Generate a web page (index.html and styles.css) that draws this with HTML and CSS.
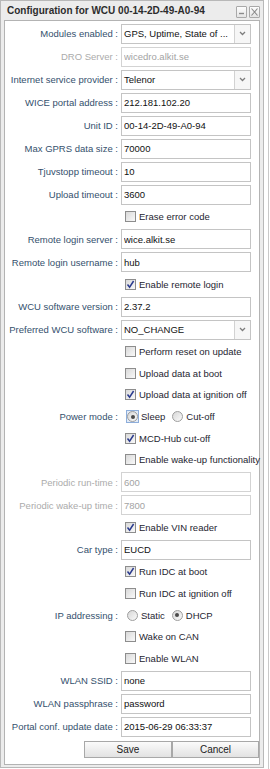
FILE: index.html
```html
<!DOCTYPE html>
<html lang="en">
<head>
    <meta charset="UTF-8">
    <title>Configuration for WCU 00-14-2D-49-A0-94</title>
    <link rel="stylesheet" href="styles.css">
</head>
<body>
<div class="window">
    <div class="titlebar">
        <span class="title">Configuration for WCU 00-14-2D-49-A0-94</span>
        <span class="tools">
            <span class="tool">
                <svg width="9" height="10" viewBox="0 0 9 10"><path d="M2 6.5 H7" stroke="#8a8a8a" stroke-width="1.4"/></svg>
            </span>
            <span class="tool">
                <svg width="9" height="10" viewBox="0 0 9 10"><path d="M1.5 1.5 L7.5 8.5 M7.5 1.5 L1.5 8.5" stroke="#8a8a8a" stroke-width="1.1"/></svg>
            </span>
        </span>
    </div>
    <form class="panel">
        <div class="row">
            <label class="lbl">Modules enabled :</label>
            <div class="select"><span class="val">GPS, Uptime, State of ...</span><span class="arrow"><svg width="7" height="5" viewBox="0 0 7 5"><path d="M1 1 L3.5 3.5 L6 1" fill="none" stroke="#7d7d7d" stroke-width="1.3"/></svg></span></div>
        </div>
        <div class="row disabled">
            <label class="lbl">DRO Server :</label>
            <input class="field" value="wicedro.alkit.se" disabled>
        </div>
        <div class="row">
            <label class="lbl">Internet service provider :</label>
            <div class="select"><span class="val">Telenor</span><span class="arrow"><svg width="7" height="5" viewBox="0 0 7 5"><path d="M1 1 L3.5 3.5 L6 1" fill="none" stroke="#7d7d7d" stroke-width="1.3"/></svg></span></div>
        </div>
        <div class="row">
            <label class="lbl">WICE portal address :</label>
            <input class="field" value="212.181.102.20">
        </div>
        <div class="row">
            <label class="lbl">Unit ID :</label>
            <input class="field" value="00-14-2D-49-A0-94">
        </div>
        <div class="row">
            <label class="lbl">Max GPRS data size :</label>
            <input class="field" value="70000">
        </div>
        <div class="row">
            <label class="lbl">Tjuvstopp timeout :</label>
            <input class="field" value="10">
        </div>
        <div class="row">
            <label class="lbl">Upload timeout :</label>
            <input class="field" value="3600">
        </div>
        <div class="row opt">
            <span class="cb"></span><span>Erase error code</span>
        </div>
        <div class="row">
            <label class="lbl">Remote login server :</label>
            <input class="field" value="wice.alkit.se">
        </div>
        <div class="row">
            <label class="lbl">Remote login username :</label>
            <input class="field" value="hub">
        </div>
        <div class="row opt">
            <span class="cb on"><svg width="9" height="9" viewBox="0 0 9 9"><path d="M1.5 4.5 L3.6 7.2 L7.6 1" fill="none" stroke="#2b3b8e" stroke-width="1.5"/></svg></span><span>Enable remote login</span>
        </div>
        <div class="row">
            <label class="lbl">WCU software version :</label>
            <input class="field" value="2.37.2">
        </div>
        <div class="row">
            <label class="lbl">Preferred WCU software :</label>
            <div class="select"><span class="val">NO_CHANGE</span><span class="arrow"><svg width="7" height="5" viewBox="0 0 7 5"><path d="M1 1 L3.5 3.5 L6 1" fill="none" stroke="#7d7d7d" stroke-width="1.3"/></svg></span></div>
        </div>
        <div class="row opt">
            <span class="cb"></span><span>Perform reset on update</span>
        </div>
        <div class="row opt">
            <span class="cb"></span><span>Upload data at boot</span>
        </div>
        <div class="row opt">
            <span class="cb on"><svg width="9" height="9" viewBox="0 0 9 9"><path d="M1.5 4.5 L3.6 7.2 L7.6 1" fill="none" stroke="#2b3b8e" stroke-width="1.5"/></svg></span><span>Upload data at ignition off</span>
        </div>
        <div class="row radio">
            <label class="lbl">Power mode :</label>
            <div class="radios">
                <span class="rb-wrap focus"><span class="rb on"></span></span><span class="rtext">Sleep</span>
                <span class="rb-wrap"><span class="rb"></span></span><span class="rtext">Cut-off</span>
            </div>
        </div>
        <div class="row opt">
            <span class="cb on"><svg width="9" height="9" viewBox="0 0 9 9"><path d="M1.5 4.5 L3.6 7.2 L7.6 1" fill="none" stroke="#2b3b8e" stroke-width="1.5"/></svg></span><span>MCD-Hub cut-off</span>
        </div>
        <div class="row opt">
            <span class="cb"></span><span>Enable wake-up functionality</span>
        </div>
        <div class="row disabled">
            <label class="lbl">Periodic run-time :</label>
            <input class="field" value="600" disabled>
        </div>
        <div class="row disabled">
            <label class="lbl">Periodic wake-up time :</label>
            <input class="field" value="7800" disabled>
        </div>
        <div class="row opt">
            <span class="cb on"><svg width="9" height="9" viewBox="0 0 9 9"><path d="M1.5 4.5 L3.6 7.2 L7.6 1" fill="none" stroke="#2b3b8e" stroke-width="1.5"/></svg></span><span>Enable VIN reader</span>
        </div>
        <div class="row">
            <label class="lbl">Car type :</label>
            <input class="field" value="EUCD">
        </div>
        <div class="row opt">
            <span class="cb on"><svg width="9" height="9" viewBox="0 0 9 9"><path d="M1.5 4.5 L3.6 7.2 L7.6 1" fill="none" stroke="#2b3b8e" stroke-width="1.5"/></svg></span><span>Run IDC at boot</span>
        </div>
        <div class="row opt">
            <span class="cb"></span><span>Run IDC at ignition off</span>
        </div>
        <div class="row radio">
            <label class="lbl">IP addressing :</label>
            <div class="radios">
                <span class="rb-wrap"><span class="rb"></span></span><span class="rtext">Static</span>
                <span class="rb-wrap"><span class="rb on"></span></span><span class="rtext">DHCP</span>
            </div>
        </div>
        <div class="row opt">
            <span class="cb"></span><span>Wake on CAN</span>
        </div>
        <div class="row opt">
            <span class="cb"></span><span>Enable WLAN</span>
        </div>
        <div class="row">
            <label class="lbl">WLAN SSID :</label>
            <input class="field" value="none">
        </div>
        <div class="row">
            <label class="lbl">WLAN passphrase :</label>
            <input class="field" value="password">
        </div>
        <div class="row">
            <label class="lbl">Portal conf. update date :</label>
            <input class="field" value="2015-06-29 06:33:37">
        </div>
        <div class="actions">
            <button type="button" class="btn save">Save</button>
            <button type="button" class="btn cancel">Cancel</button>
        </div>
    </form>
</div>
<div class="behind"></div>
</body>
</html>
```

FILE: styles.css
```css
* {
    margin: 0;
    padding: 0;
    box-sizing: border-box;
}

body {
    font-family: "Liberation Sans", Arial, sans-serif;
    font-size: 9.5px;
    color: #222;
    background: #fff;
    display: flex;
    height: 769px;
    overflow: hidden;
}

.window {
    width: 264px;
    height: 768px;
    flex: none;
    border: 1px solid #b8b8b8;
    background: #ececec;
    padding: 0 3px 2px 3px;
    display: flex;
    flex-direction: column;
}

.behind {
    margin-left: 4px;
    width: 2px;
    border-left: 1px solid #c9c9c9;
}

.titlebar {
    height: 19px;
    display: flex;
    align-items: center;
    justify-content: space-between;
    padding-left: 3px;
}

.title {
    font-weight: bold;
    font-size: 10px;
    color: #2c2c2c;
    white-space: nowrap;
}

.tools {
    display: flex;
    gap: 2px;
    margin-top: 2px;
}

.tool {
    width: 11px;
    height: 12px;
    border: 1px solid #a9a9a9;
    border-radius: 1px;
    background: linear-gradient(#fdfdfd, #e4e4e4);
    display: flex;
    align-items: center;
    justify-content: center;
}

.panel {
    flex: 1;
    background: #fff;
    border: 1px solid #b3b3b3;
    padding-top: 1px;
}

.row {
    display: grid;
    grid-template-columns: 114px 130px;
    column-gap: 2px;
    align-items: center;
    height: 23px;
}

.row.opt {
    height: 21.5px;
    display: flex;
    padding-left: 120px;
    gap: 3px;
    white-space: nowrap;
    color: #252530;
}

.row.radio {
    height: 22px;
}

.lbl {
    text-align: right;
    white-space: nowrap;
    color: #34506d;
    padding-right: 1px;
}

.disabled .lbl {
    color: #ababab;
}

.field {
    width: 130px;
    height: 20px;
    border: 1px solid #c4c4c4;
    padding: 0 2px;
    font-family: "Liberation Sans", Arial, sans-serif;
    font-size: 9.5px;
    color: #111;
    background: #fff;
    outline: none;
}

.field:disabled {
    color: #a3a3a3;
    border-color: #d3d3d3;
}

.select {
    width: 130px;
    height: 20px;
    border: 1px solid #c4c4c4;
    display: flex;
    align-items: center;
}

.select .val {
    flex: 1;
    padding-left: 2px;
    color: #111;
    white-space: nowrap;
    overflow: hidden;
}

.select .arrow {
    width: 16px;
    height: 100%;
    border-left: 1px solid #d2d2d2;
    background: #f6f6f6;
    display: flex;
    align-items: center;
    justify-content: center;
}

.cb {
    width: 11px;
    height: 11px;
    flex: none;
    border: 1px solid #8d8d8d;
    background: linear-gradient(135deg, #d9d9d9, #f9f9f9);
    display: flex;
    align-items: center;
    justify-content: center;
}

.radios {
    display: flex;
    align-items: center;
    padding-left: 5px;
    color: #252530;
}

.rb-wrap {
    width: 13px;
    height: 13px;
    display: flex;
    align-items: center;
    justify-content: center;
    border: 1px solid transparent;
}

.rb-wrap.focus {
    border-color: #8eaedb;
    background: #e2ebf7;
}

.rb {
    width: 11px;
    height: 11px;
    border-radius: 50%;
    border: 1px solid #9e9e9e;
    background: linear-gradient(135deg, #d7d7d7, #fafafa);
    display: flex;
    align-items: center;
    justify-content: center;
}

.rb.on::after {
    content: '';
    width: 4px;
    height: 4px;
    border-radius: 50%;
    background: #4a4a4a;
}

.rtext {
    margin-left: 2px;
    margin-right: 6px;
}

.actions {
    display: flex;
    justify-content: flex-end;
    margin-top: 3px;
}

.btn {
    height: 17px;
    border: 1px solid #a8a8a8;
    background: linear-gradient(#fbfbfb, #e2e2e2);
    font-family: "Liberation Sans", Arial, sans-serif;
    font-size: 10px;
    color: #222;
}

.save {
    width: 88px;
}

.cancel {
    width: 87px;
}
```
